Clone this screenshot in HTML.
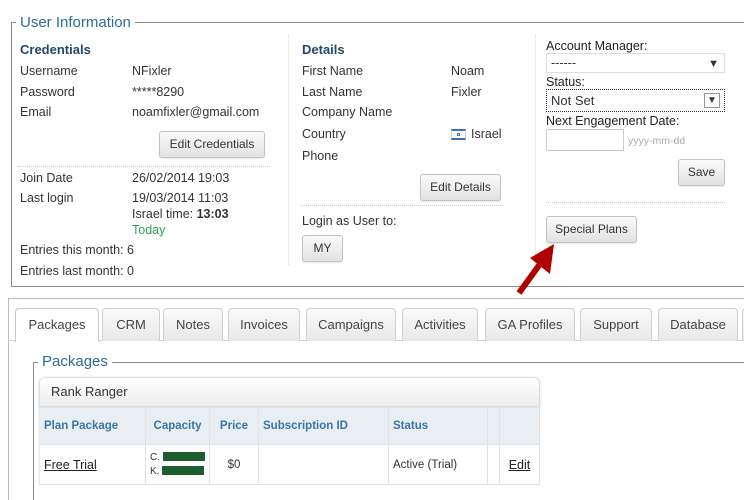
<!DOCTYPE html>
<html style="width:744px;height:500px;overflow:hidden"><head><meta charset="utf-8"><style>
*{margin:0;padding:0;box-sizing:border-box}
body{width:744px;height:500px;overflow:hidden;background:#fff;font-family:"Liberation Sans",sans-serif;font-size:12.5px;color:#333;position:relative}
.a{position:absolute;white-space:nowrap;line-height:14px}
.btn{position:absolute;border:1px solid #c4c4c4;border-radius:3px;background:linear-gradient(#fafafa,#e2e2e2);text-align:center;font-size:12px;color:#333;box-shadow:0 1px 1px rgba(0,0,0,.1)}
.h{font-weight:bold;color:#23476e;font-size:13px}
.leg{position:absolute;background:#fff;color:#2b6d96;font-size:15px;padding:0 4px;line-height:18px}
.tab{position:absolute;top:308px;height:33px;border:1px solid #d0d0d0;border-bottom:none;border-radius:4px 4px 0 0;background:linear-gradient(#fafafa,#e8e8e8);text-align:center;line-height:32px;font-size:13px;color:#444}
td{border:1px solid #e0e4e8;font-size:11.5px;padding:0 4px}
</style></head><body>
<div style="position:absolute;left:11px;top:22px;width:740px;height:265px;border:1px solid #8a8a8a;border-right:none"></div>
<div class="leg" style="left:16px;top:14px">User Information</div>
<div class="a h" style="left:20px;top:43px">Credentials</div>
<div class="a" style="left:20px;top:64px">Username</div><div class="a" style="left:132px;top:64px">NFixler</div>
<div class="a" style="left:20px;top:85px">Password</div><div class="a" style="left:132px;top:85px">*****8290</div>
<div class="a" style="left:20px;top:105px">Email</div><div class="a" style="left:132px;top:105px">noamfixler@gmail.com</div>
<div class="btn" style="left:159px;top:131px;width:106px;height:27px;line-height:25px">Edit Credentials</div>
<div style="position:absolute;left:18px;top:166px;width:252px;border-top:1px dotted #ccc"></div>
<div class="a" style="left:20px;top:171px">Join Date</div><div class="a" style="left:132px;top:171px">26/02/2014 19:03</div>
<div class="a" style="left:20px;top:191px">Last login</div><div class="a" style="left:132px;top:191px">19/03/2014 11:03</div>
<div class="a" style="left:132px;top:207px">Israel time: <b>13:03</b></div>
<div class="a" style="left:132px;top:223px;color:#2aa35a">Today</div>
<div class="a" style="left:20px;top:243px">Entries this month: 6</div>
<div class="a" style="left:20px;top:264px">Entries last month: 0</div>
<div style="position:absolute;left:288px;top:35px;height:230px;border-left:1px dotted #ddd"></div>
<div class="a h" style="left:302px;top:43px">Details</div>
<div class="a" style="left:302px;top:64px">First Name</div><div class="a" style="left:451px;top:64px">Noam</div>
<div class="a" style="left:302px;top:85px">Last Name</div><div class="a" style="left:451px;top:85px">Fixler</div>
<div class="a" style="left:302px;top:105px">Company Name</div>
<div class="a" style="left:302px;top:127px">Country</div>
<div style="position:absolute;left:451px;top:129px;width:15px;height:11px;background:#fff;border:1px solid #ccc;border-top:2px solid #3a6fc0;border-bottom:2px solid #3a6fc0"><div style="position:absolute;left:5px;top:2px;width:3px;height:3px;border:1px solid #3a6fc0"></div></div>
<div class="a" style="left:471px;top:127px">Israel</div>
<div class="a" style="left:302px;top:149px">Phone</div>
<div class="btn" style="left:420px;top:174px;width:81px;height:27px;line-height:25px">Edit Details</div>
<div style="position:absolute;left:300px;top:205px;width:203px;border-top:1px dotted #ccc"></div>
<div class="a" style="left:302px;top:214px">Login as User to:</div>
<div class="btn" style="left:302px;top:235px;width:41px;height:27px;line-height:25px">MY</div>
<div style="position:absolute;left:535px;top:35px;height:230px;border-left:1px dotted #ddd"></div>
<div class="a" style="left:546px;top:39px;color:#222">Account Manager:</div>
<div style="position:absolute;left:546px;top:53px;width:179px;height:20px;border:1px solid #ddd;background:#fff"><div class="a" style="left:4px;top:2px">------</div><div class="a" style="right:5px;top:3px;font-size:11px">▼</div></div>
<div class="a" style="left:546px;top:75px;color:#222">Status:</div>
<div style="position:absolute;left:546px;top:89px;width:179px;height:23px;border:1px dotted #335;background:#fff"><div class="a" style="left:4px;top:4px;font-size:13px">Not Set</div><div style="position:absolute;right:4px;top:3px;width:16px;height:15px;border:1px solid #999;font-size:10px;text-align:center;line-height:13px">▼</div></div>
<div class="a" style="left:546px;top:114px;color:#222">Next Engagement Date:</div>
<div style="position:absolute;left:546px;top:129px;width:78px;height:22px;border:1px solid #ccc"></div>
<div class="a" style="left:628px;top:134px;font-size:10.5px;color:#aaa">yyyy-mm-dd</div>
<div class="btn" style="left:678px;top:159px;width:47px;height:27px;line-height:25px">Save</div>
<div style="position:absolute;left:546px;top:202px;width:179px;border-top:1px dotted #ccc"></div>
<div class="btn" style="left:546px;top:216px;width:91px;height:27px;line-height:25px">Special Plans</div>
<svg style="position:absolute;left:510px;top:240px" width="50" height="60"><line x1="9" y1="53" x2="30" y2="24" stroke="#b00000" stroke-width="6"/><polygon points="44,4 20,18 40,34" fill="#b00000"/></svg>
<div style="position:absolute;left:8px;top:298px;width:740px;height:210px;border:1px solid #bbb;border-right:none;border-bottom:none"></div>
<div style="position:absolute;left:8px;top:340px;width:740px;border-top:1px solid #d0d0d0"></div>
<div class="tab" style="left:15px;width:84px;background:#fff;height:34px;border-color:#c8c8c8">Packages</div>
<div class="tab" style="left:102px;width:58px">CRM</div>
<div class="tab" style="left:163px;width:60px">Notes</div>
<div class="tab" style="left:228px;width:72px">Invoices</div>
<div class="tab" style="left:306px;width:90px">Campaigns</div>
<div class="tab" style="left:402px;width:76px">Activities</div>
<div class="tab" style="left:485px;width:90px">GA Profiles</div>
<div class="tab" style="left:580px;width:72px">Support</div>
<div class="tab" style="left:658px;width:80px">Database</div>
<div class="tab" style="left:742px;width:20px"></div>
<div style="position:absolute;left:33px;top:362px;width:720px;height:150px;border:1px solid #8a8a8a;border-right:none;border-bottom:none"></div>
<div class="leg" style="left:38px;top:353px">Packages</div>
<div style="position:absolute;left:39px;top:377px;width:501px;height:30px;border:1px solid #ddd;border-radius:6px 6px 0 0;background:linear-gradient(#fff,#ececec);box-shadow:0 1px 3px rgba(0,0,0,.15);padding-left:11px;line-height:28px;font-size:13px">Rank Ranger</div>
<table style="position:absolute;left:39px;top:407px;width:501px;border-collapse:collapse">
<tr style="height:37px;background:#e8eef2;color:#3a75a5;font-weight:bold"><td style="width:106px">Plan Package</td><td style="width:64px;text-align:center">Capacity</td><td style="width:49px;text-align:center">Price</td><td style="width:130px">Subscription ID</td><td style="width:99px">Status</td><td style="width:12px"></td><td></td></tr>
<tr style="height:40px;background:#fff"><td style="font-size:12.5px;text-decoration:underline;color:#222">Free Trial</td><td style="line-height:14px;font-size:10px">C. <span style="display:inline-block;width:42px;height:9px;background:#1d5e2e;vertical-align:middle"></span><br>K. <span style="display:inline-block;width:42px;height:9px;background:#1d5e2e;vertical-align:middle"></span></td><td style="text-align:center">$0</td><td></td><td>Active (Trial)</td><td></td><td style="text-align:center;font-size:12.5px;text-decoration:underline;color:#222">Edit</td></tr>
</table>
</body></html>
